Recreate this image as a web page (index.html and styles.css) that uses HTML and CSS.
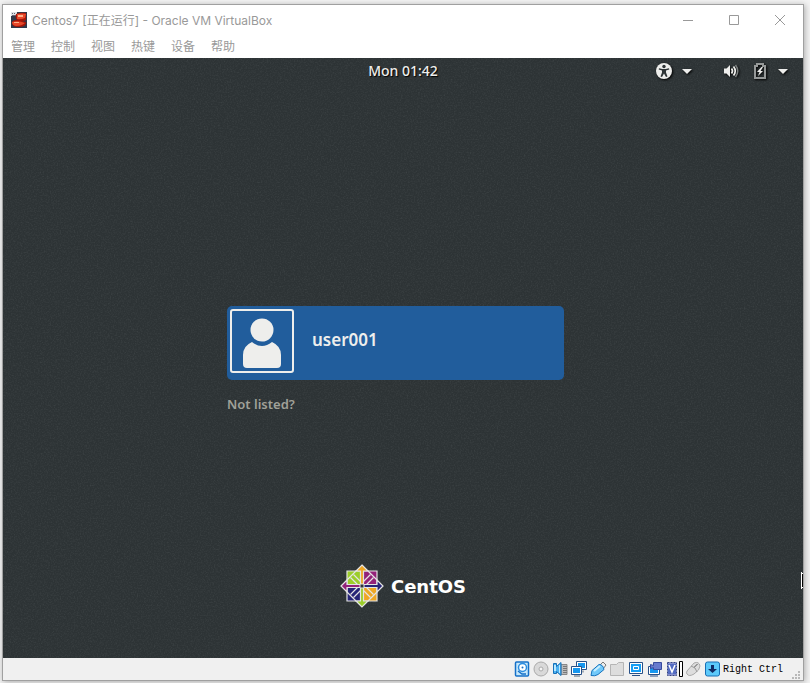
FILE: index.html
```html
<!DOCTYPE html>
<html lang="zh-CN">
<head>
<meta charset="utf-8">
<title>Centos7 [正在运行] - Oracle VM VirtualBox</title>
<link rel="stylesheet" href="styles.css">
</head>
<body>
<div class="window">
  <header class="titlebar">
    <svg class="app-icon" viewBox="0 0 16 16" aria-hidden="true">
      <path fill="#30394a" d="M0 0h16v16H0z"/>
      <path fill="#dfe3e6" d="M0 0h6v4H0z"/>
      <path stroke="#667" d="M1 1.500h1M3 1.500h1M1 3.500h4"/>
      <path fill="#a51508" d="M5 2q6-2 10-1v7q-1 1-4 1l4 1q1 5-8 5-6 0-6-4 0-3 5-3-2-2-1-6z"/>
      <path fill="#e8482a" d="M6 2q5-1 9 0l-1 4q-4 2-8 1zM1 10q6-2 13 1-3 3-9 3-4-1-4-4z"/>
      <path fill="#ffb08a" d="M7 3h5v2H7zM3 10h5v1H3z"/>
    </svg>
    <h1 class="title">Centos7 [正在运行] - Oracle VM VirtualBox</h1>
    <button class="win-button" aria-label="最小化"><svg viewBox="0 0 12 12"><path d="M1 6.500h10"/></svg></button>
    <button class="win-button" aria-label="最大化"><svg viewBox="0 0 12 12"><path d="M1.500 1.500h9v9h-9z"/></svg></button>
    <button class="win-button" aria-label="关闭"><svg viewBox="0 0 12 12"><path d="M1 1l10 10M11 1L1 11"/></svg></button>
  </header>
  <nav class="menubar">
    <button>管理</button><button>控制</button><button>视图</button><button>热键</button><button>设备</button><button>帮助</button>
  </nav>

  <main class="screen">
    <svg class="grain" aria-hidden="true">
      <filter id="noise"><feTurbulence type="fractalNoise" baseFrequency="0.7" numOctaves="2" seed="4"/><feColorMatrix values="0 0 0 0 .6  0 0 0 0 .65  0 0 0 0 .65  .6 .6 0 0 -.52"/></filter>
      <rect width="100%" height="100%" filter="url(#noise)"/>
    </svg>
    <div class="topbar">
      <time class="clock">Mon 01:42</time>
      <div class="indicators">
        <button class="indicator" aria-label="Accessibility">
          <svg class="glyph" viewBox="0 0 16 16"><circle cx="8" cy="8" r="8" fill="#eeeeec"/><circle cx="8" cy="3.500" r="1.700" fill="#2e3436"/><path fill="#2e3436" d="M3 5.200l3.300.8h3.400l3.300-.8.3 1.300-3.300 1v2l1.500 4-1.500.5L8 10.500 6 14l-1.500-.5 1.500-4v-2l-3.300-1z"/></svg>
          <svg class="caret" viewBox="0 0 10 5"><path fill="#eeeeec" d="M0 0h10L5 5z"/></svg>
        </button>
        <button class="indicator" aria-label="System">
          <svg class="glyph volume" viewBox="0 0 16 16"><path fill="#eeeeec" d="M1 5.500h2.500L7 2v12l-3.500-3.500H1z"/><path fill="none" stroke="#eeeeec" stroke-width="1.700" d="M8.500 5.500q2 2.500 0 5M10.500 3.500q3.500 4.500 0 9"/><path fill="none" stroke="#7c8080" stroke-width="1.500" d="M12.500 2q4.500 6 0 12"/></svg>
          <svg class="glyph" viewBox="0 0 16 16"><path fill="none" stroke="#969999" stroke-width="2" d="M3 3h2V1h6v2h2v12H3z"/><path fill="#eeeeec" d="M9.500 4L5 9h2.500L6 13l5-5H8.500L11 4z"/></svg>
          <svg class="caret" viewBox="0 0 10 5"><path fill="#eeeeec" d="M0 0h10L5 5z"/></svg>
        </button>
      </div>
    </div>

    <section class="login">
      <div class="login-box">
        <button class="user">
          <span class="avatar">
            <svg viewBox="0 0 60 60"><circle cx="30" cy="19" r="11.500" fill="#eeeeec"/><path fill="#eeeeec" d="M20 31q10 8 20 0 9 4 9 13v9q0 4-4 4H15q-4 0-4-4v-9q0-9 9-13z"/></svg>
          </span>
          <span class="user-name">user001</span>
        </button>
        <button class="not-listed">Not listed?</button>
      </div>
    </section>

    <div class="brand">
      <svg class="brand-mark" viewBox="0 0 44 44" aria-hidden="true">
        <g stroke="#e4e4e4" stroke-width="1.200">
          <path fill="#9ccd2a" d="M7 7h15v15H7z"/>
          <path fill="#932279" d="M22 7h15v15H22z"/>
          <path fill="#262577" d="M7 22h15v15H7z"/>
          <path fill="#efa724" d="M22 22h15v15H22z"/>
          <path fill="#efa724" d="M22 1l6 6h-4.500v15h-3V7H16z"/>
          <path fill="#262577" d="M43 22l-6 6v-4.500H22v-3h15V16z"/>
          <path fill="#9ccd2a" d="M22 43l-6-6h4.500V22h3v15H28z"/>
          <path fill="#932279" d="M1 22l6-6v4.500h15v3H7V28z"/>
          <path fill="none" d="M16 7l-9 9M28 7l9 9M16 37l-9-9M28 37l9-9"/>
          <path fill="none" d="M13.500 10.500l7 7M10.500 13.500l7 7M30.500 10.500l-7 7M33.500 13.500l-7 7M13.500 33.500l7-7M10.500 30.500l7-7M30.500 33.500l-7-7M33.500 30.500l-7-7"/>
        </g>
        <path fill="#2e3436" stroke="#e4e4e4" d="M20 20h4v4h-4z"/>
      </svg>
      <span>CentOS</span>
    </div>
    <svg class="pointer" viewBox="0 0 2 17" aria-hidden="true"><path fill="#fff" d="M0 0h1v1h1v1H1v13h1v1H1v1H0z"/><path fill="#000" d="M1 2h1v13H1z"/></svg>
  </main>

  <footer class="statusbar">
    <svg viewBox="0 0 16 16"><rect x="1.500" y="1" width="13" height="14" rx="1" fill="#c6e8fb" stroke="#1670c8" stroke-width="1.500"/><circle cx="8.500" cy="6.500" r="4" fill="#fff" stroke="#2b8de0" stroke-width="1.500"/><circle cx="8.500" cy="6.500" r="1" fill="#1670c8"/><path stroke="#1670c8" stroke-width="1.500" d="M4 10l4 3h4" fill="none"/></svg>
    <svg viewBox="0 0 16 16"><circle cx="8" cy="8" r="7" fill="#d9d9d9" stroke="#aaa"/><circle cx="8" cy="8" r="2" fill="#f5f5f5" stroke="#aaa"/></svg>
    <svg viewBox="0 0 16 16"><path fill="#bbb" stroke="#888" d="M9 3.500h6v10H9z"/><path stroke="#777" d="M11 5.500h4M11 7.500h4M11 9.500h4M11 11.500h4"/><path fill="#4cb2f2" stroke="#1770b8" d="M1.500 2.500h3v3L9 1.500v13l-4.500-4v2h-3z"/><path fill="#b9e8ff" d="M2 4h2v6H2zM7 4h1v8H7z"/></svg>
    <svg viewBox="0 0 16 16"><path fill="#fff" stroke="#285087" d="M5.500.5h10v8h-10z"/><path fill="#1697ef" d="M7 2h7v5H7z"/><path fill="#fff" stroke="#285087" d="M.5 5.500h10v8H.5z"/><path fill="#1697ef" d="M2 7h7v5H2z"/><path stroke="#567" d="M3 15h6M12 9.500v2"/></svg>
    <svg viewBox="0 0 16 16"><path fill="#eee" stroke="#777" d="M10 4l3-3 3 3-3 4z"/><path fill="#71c9fa" stroke="#1773bd" d="M1 14.500l1-5 7-6q4 0 5 5l-6 5q-3 2-7 1z"/><path stroke="#c8efff" stroke-width="2" d="M4 10l6-5"/></svg>
    <svg viewBox="0 0 16 16"><path fill="#ddd" stroke="#b5b5b5" d="M1.500 3.500h6l2-2h5v13h-13z"/></svg>
    <svg viewBox="0 0 16 16"><path fill="#fff" stroke="#285087" d="M1.500 1.500h13v11h-13zM4 14.500h8"/><path fill="#149ef5" d="M3 3h10v8H3z"/><path fill="#1598ee" stroke="#fff" d="M5.500 5.500h5v3h-5z"/></svg>
    <svg viewBox="0 0 16 16"><path fill="#fff" stroke="#285087" d="M1.500 5.500h11v8h-11zM3 15h8"/><path fill="#1697ef" d="M3 7h8v5H3z"/><path fill="#6779cd" stroke="#374a9d" d="M3.500 3.500l3 1v-3h8v7h-8v-2l-3 1z"/></svg>
    <svg viewBox="0 0 16 16"><path fill="#8790cf" stroke="#354583" stroke-dasharray="2 1" d="M1.500 1.500h9v13h-9z"/><path fill="#536cc2" d="M2 3h8v10H2z"/><path fill="none" stroke="#fff" stroke-width="1.500" d="M3 4l3 7 3-7"/><path fill="#fff" stroke="#000" d="M13.500 .5h3v15h-3z"/></svg>
    <svg viewBox="0 0 16 16"><path fill="#ddd" stroke="#aaa" d="M2 10l7-8q5-2 6 3 0 4-6 8-5 3-7 0-1-1 0-3z"/><path fill="none" stroke="#999" d="M6 5q5 1 6 6M9 7l4-4M9 6l3-3"/></svg>
    <svg viewBox="0 0 16 16"><rect x="1.500" y="1" width="14" height="14" rx="2" fill="#5cc9fa" stroke="#176eb5"/><path fill="#102b65" d="M7 4h3v4h3l-4.500 4L4 8h3z"/></svg>
    <span class="host-key">Right Ctrl</span>
    <svg class="grip" viewBox="0 0 9 9"><path fill="#b8b8b8" d="M6 0h2v2H6zM3 3h2v2H3zM6 3h2v2H6zM0 6h2v2H0zM3 6h2v2H3zM6 6h2v2H6z"/></svg>
  </footer>
</div>
</body>
</html>
```
FILE: styles.css
```css
* {
  box-sizing: border-box;
}

body {
  margin: 0;
  height: 100vh;
  padding: 4px 6px 2px 2px;
  display: flex;
  background: #f3f3f3;
  font-family: "Noto Sans", "Noto Sans CJK SC", sans-serif;
}

button {
  margin: 0;
  padding: 0;
  border: 0;
  background: none;
  font: inherit;
  color: inherit;
}

svg {
  display: block;
  flex: none;
}

.window {
  flex: 1;
  display: flex;
  flex-direction: column;
  border: 1px solid #a0a0a0;
  background: #fff;
  box-shadow: 1px 1px 6px rgba(0, 0, 0, 0.3);
}

.titlebar {
  display: flex;
  align-items: center;
  height: 29px;
  padding-left: 8px;
  color: #999;
}

.app-icon {
  width: 16px;
  height: 16px;
  margin-right: 5px;
}

.title {
  flex: 1;
  margin: 0;
  font-family: Inter, "Noto Sans CJK SC", sans-serif;
  font-size: 12px;
  font-weight: 400;
}

.win-button {
  width: 46px;
  height: 28px;
  display: grid;
  place-items: center;
}

.win-button svg {
  width: 12px;
  height: 12px;
  fill: none;
  stroke: #999;
}

.menubar {
  display: flex;
  gap: 16px;
  height: 24px;
  padding-left: 8px;
  font-size: 12px;
  color: #999;
}

.screen {
  position: relative;
  flex: 1;
  display: flex;
  flex-direction: column;
  overflow: hidden;
  background: #2d3335;
  color: #eeeeec;
}

.grain {
  position: absolute;
  inset: 0;
  width: 100%;
  height: 100%;
  opacity: 0.2;
}

.topbar,
.login,
.brand {
  position: relative;
}

.topbar {
  display: grid;
  grid-template-columns: 1fr auto 1fr;
  align-items: center;
  height: 26px;
  padding: 0 15px;
}

.clock {
  grid-column: 2;
  padding-bottom: 2px;
  font-size: 14px;
  font-weight: 500;
  text-shadow: 1px 1px 1px #000;
}

.indicators {
  display: flex;
  justify-content: flex-end;
  gap: 31px;
}

.indicator {
  display: flex;
  align-items: center;
  gap: 10px;
  filter: drop-shadow(1px 1px 1px #000);
}

.glyph {
  width: 16px;
  height: 16px;
}

.volume {
  margin-right: 3px;
}

.caret {
  width: 10px;
  height: 5px;
}

.login {
  flex: 1;
  display: flex;
  align-items: center;
  justify-content: center;
  padding: 72px 15px 0 0;
}

.login-box {
  width: 337px;
  display: flex;
  flex-direction: column;
  align-items: flex-start;
  gap: 14px;
}

.user {
  width: 100%;
  display: flex;
  align-items: center;
  gap: 18px;
  padding: 3px 3px 7px;
  border-radius: 5px;
  background: #215d9c;
  font-size: 17px;
  font-weight: 600;
}

.user-name {
  padding-bottom: 4px;
}

.avatar {
  border: 2px solid #eeeeec;
  border-radius: 3px;
}

.avatar svg {
  width: 60px;
  height: 60px;
}

.not-listed {
  font-size: 13px;
  line-height: 20px;
  font-weight: 600;
  color: #a0a199;
}

.brand {
  display: flex;
  align-items: center;
  justify-content: center;
  gap: 7px;
  padding-bottom: 50px;
  font: bold 18px "DejaVu Sans", sans-serif;
  color: #fff;
}

.brand-mark {
  width: 44px;
  height: 44px;
}

.pointer {
  position: absolute;
  right: 0;
  top: 514px;
  width: 2px;
  height: 17px;
}

.statusbar {
  display: flex;
  align-items: center;
  justify-content: flex-end;
  gap: 3px;
  height: 22px;
  padding-right: 2px;
  background: #f0f0f0;
}

.statusbar svg {
  width: 16px;
  height: 16px;
  overflow: visible;
}

.host-key {
  font: 10px "Liberation Mono", monospace;
  color: #000;
}

.statusbar .grip {
  width: 9px;
  height: 9px;
  margin-left: 6px;
  align-self: flex-end;
}
```
